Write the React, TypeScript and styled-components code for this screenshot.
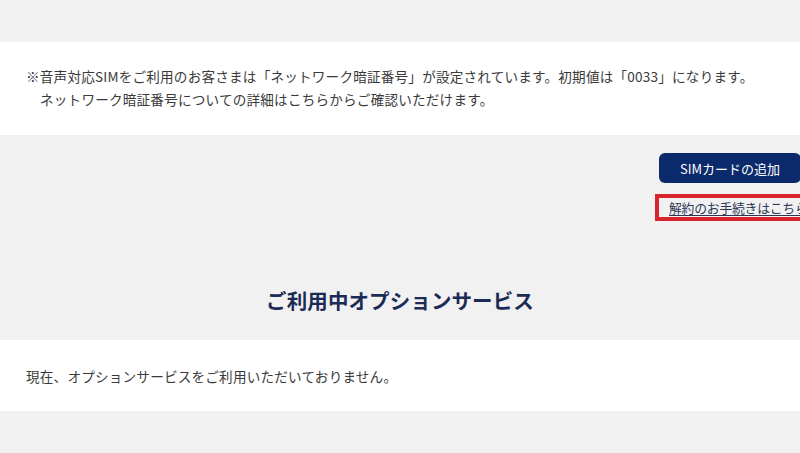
import React from "react";
import styled, { createGlobalStyle } from "styled-components";

const GlobalStyle = createGlobalStyle`
  html, body {
    margin: 0;
    padding: 0;
    background: #f1f1f1;
    overflow: hidden;
  }
  body {
    font-family: "Noto Sans CJK JP", "Noto Sans", sans-serif;
    color: #333333;
  }
`;

const Page = styled.div`
  width: 800px;
  padding-top: 42px;
  overflow: hidden;
`;

const WhiteBox = styled.section<{ $pt: number; $h: number }>`
  background: #ffffff;
  height: ${(p) => p.$h}px;
  box-sizing: border-box;
  padding: ${(p) => p.$pt}px 26px 0 26px;
  font-size: 13.6px;
  line-height: 23px;
  color: #3a3a3a;
  letter-spacing: 0.2px;
`;

const Line = styled.p<{ $indent?: boolean }>`
  margin: 0;
  white-space: nowrap;
  padding-left: ${(p) => (p.$indent ? "14px" : "0")};
`;

const GraySection = styled.div`
  height: 205px;
  display: flex;
  flex-direction: column;
`;

const Actions = styled.div`
  display: flex;
  justify-content: flex-end;
  padding-top: 18px;
  margin-right: -6px;
`;

const ActionColumn = styled.div`
  width: 151px;
  display: flex;
  flex-direction: column;
  align-items: flex-start;
  gap: 11px;
`;

const PrimaryButton = styled.button`
  margin-left: 4px;
  width: 142px;
  height: 30px;
  border: none;
  border-radius: 6px;
  background: #0b2a6b;
  color: #ffffff;
  font-family: "Noto Sans CJK JP", "Noto Sans", sans-serif;
  font-size: 13px;
  padding: 0;
  cursor: pointer;
`;

const LinkBox = styled.div`
  box-sizing: border-box;
  height: 27px;
  width: 170px;
  border: 4px solid #d8242c;
  padding-left: 10px;
  display: flex;
  align-items: center;
  white-space: nowrap;
`;

const CancelLink = styled.a`
  font-size: 12.8px;
  color: #2b3657;
  text-decoration: underline;
  text-underline-offset: 2px;
  letter-spacing: -0.2px;
`;

const Heading = styled.h2`
  margin: 0;
  margin-top: auto;
  height: 70px;
  display: flex;
  align-items: flex-start;
  justify-content: center;
  font-size: 20.5px;
  font-weight: 700;
  color: #1c2b55;
  line-height: 1;
  padding-top: 20px;
  box-sizing: border-box;
  letter-spacing: 0.1px;
`;

export default function App() {
  return (
    <>
      <GlobalStyle />
      <Page>
        <WhiteBox $pt={23} $h={93}>
          <Line>
            ※音声対応SIMをご利用のお客さまは「ネットワーク暗証番号」が設定されています。初期値は「0033」になります。
          </Line>
          <Line $indent>ネットワーク暗証番号についての詳細はこちらからご確認いただけます。</Line>
        </WhiteBox>
        <GraySection>
          <Actions>
            <ActionColumn>
              <PrimaryButton type="button">SIMカードの追加</PrimaryButton>
              <LinkBox>
                <CancelLink href="#">解約のお手続きはこちら</CancelLink>
              </LinkBox>
            </ActionColumn>
          </Actions>
          <Heading>ご利用中オプションサービス</Heading>
        </GraySection>
        <WhiteBox $pt={25} $h={71}>
          <Line>現在、オプションサービスをご利用いただいておりません。</Line>
        </WhiteBox>
      </Page>
    </>
  );
}
